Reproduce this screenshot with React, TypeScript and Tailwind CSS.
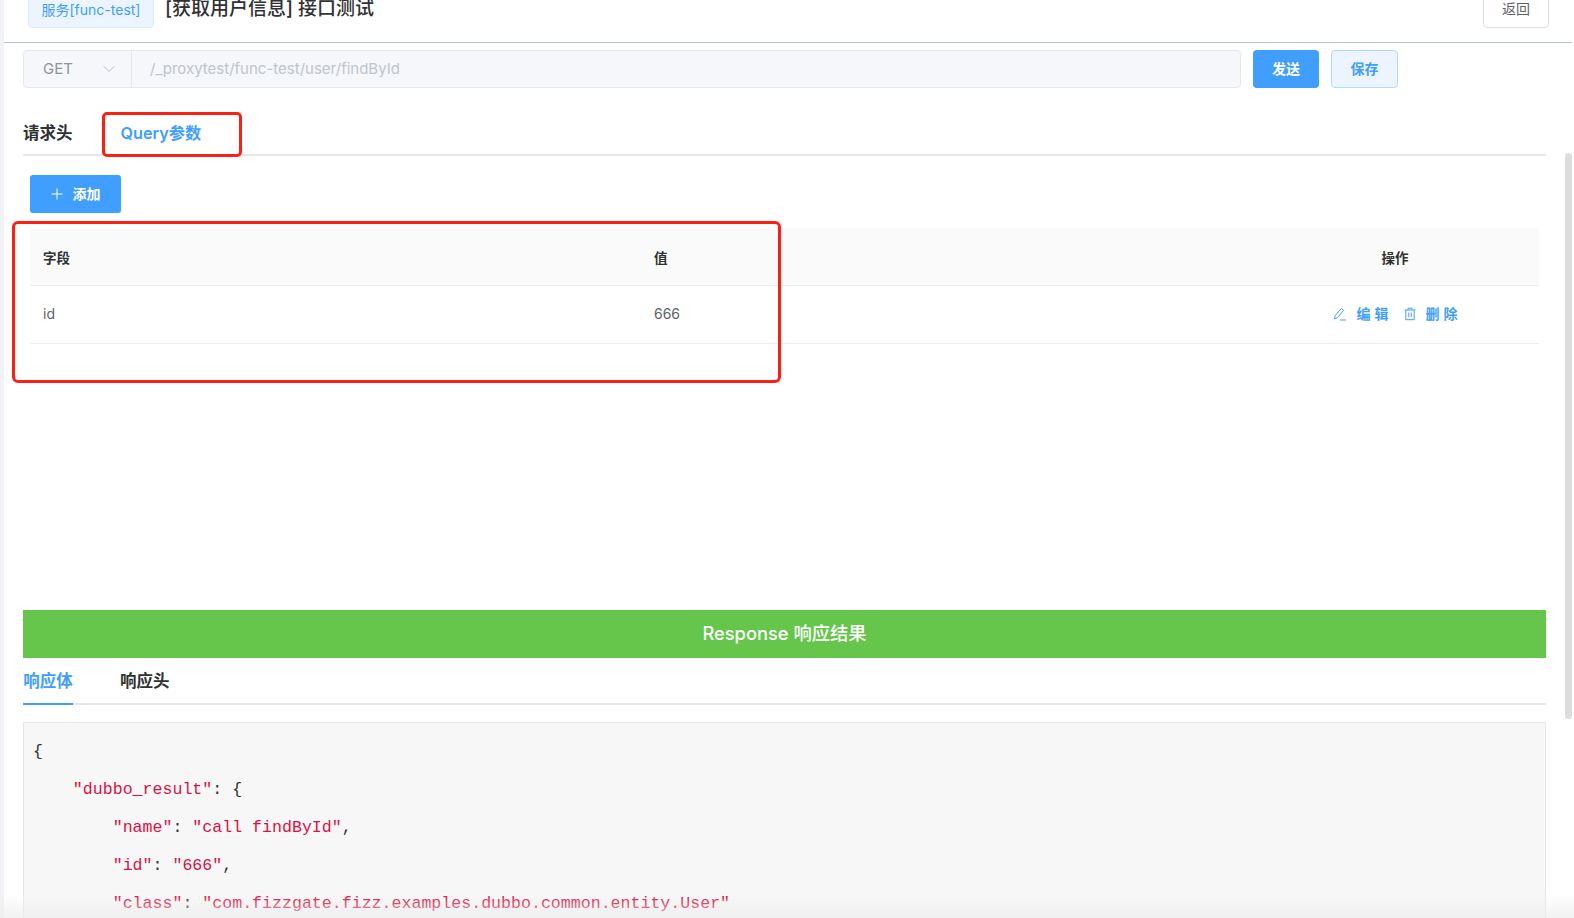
import { ChevronDown } from "lucide-react";

const font = "font-['Inter','Noto_Sans_CJK_SC',sans-serif]";

const codeLines = [
  { indent: 0, parts: [{ t: "{", c: "text-[#333333]" }] },
  {
    indent: 1,
    parts: [
      { t: '"dubbo_result"', c: "text-[#dd1144]" },
      { t: ": {", c: "text-[#333333]" },
    ],
  },
  {
    indent: 2,
    parts: [
      { t: '"name"', c: "text-[#dd1144]" },
      { t: ": ", c: "text-[#333333]" },
      { t: '"call findById"', c: "text-[#dd1144]" },
      { t: ",", c: "text-[#333333]" },
    ],
  },
  {
    indent: 2,
    parts: [
      { t: '"id"', c: "text-[#dd1144]" },
      { t: ": ", c: "text-[#333333]" },
      { t: '"666"', c: "text-[#dd1144]" },
      { t: ",", c: "text-[#333333]" },
    ],
  },
  {
    indent: 2,
    parts: [
      { t: '"class"', c: "text-[#dd1144]" },
      { t: ": ", c: "text-[#333333]" },
      { t: '"com.fizzgate.fizz.examples.dubbo.common.entity.User"', c: "text-[#dd1144]" },
    ],
  },
];

function EditIcon() {
  return (
    <svg width="14" height="14" viewBox="0 0 14 14" fill="none" stroke="#409eff" strokeWidth="1">
      <path d="M1.5 12 L2.2 8.4 L8.4 1.6 L10.6 3.4 L4.4 10.6 Z" />
      <path d="M7 13 H13" />
    </svg>
  );
}

function TrashIcon() {
  return (
    <svg width="14" height="14" viewBox="0 0 14 14" fill="none" stroke="#409eff" strokeWidth="1">
      <path d="M1.5 3 H12.5" />
      <path d="M5 3 V1.2 H9 V3" />
      <path d="M2.8 3 V12.7 H11.2 V3" />
      <path d="M5.8 5.5 V10 M8.2 5.5 V10" />
    </svg>
  );
}

export default function App() {
  return (
    <div className={`relative h-[918px] w-[1574px] overflow-hidden bg-white ${font}`}>
      <div className="flex h-full">
        <div className="w-[4px] shrink-0 bg-[#f2f3f7]" />
        <div className="min-w-0 flex-1">
          {/* Header */}
          <div className="mr-[2px] flex h-[43px] items-start justify-between border-b border-[#b4c3d8] pl-[24px] pr-[23px]">
            <div className="flex items-start">
              <span className="mt-[-12px] flex h-[40px] w-[126px] items-center justify-center rounded-[4px] border border-[#d9ecff] bg-[#ecf5ff] pt-[2px] text-[14px] text-[#409eff]">
                服务[func-test]
              </span>
              <span className="ml-[11px] mt-[-3px] text-[19px] leading-[24px] font-medium text-[#303133]">
                [获取用户信息] 接口测试
              </span>
            </div>
            <button className="mt-[-12px] flex h-[40px] w-[66px] items-center justify-center rounded-[4px] border border-[#dcdfe6] bg-white text-[14px] text-[#606266]">
              返回
            </button>
          </div>

          <div className="pl-[19px] pr-[28px]">
            {/* Request line */}
            <div className="mt-[7px] flex h-[38px] items-stretch">
              <div className="flex w-[1218px] overflow-hidden rounded-[4px] border border-[#e4e7ed] bg-[#f5f7fa]">
                <div className="flex w-[108px] items-center justify-between border-r border-[#e4e7ed] pl-[19px] pr-[12px] text-[15px] text-[#909399]">
                  GET
                  <ChevronDown size={20} strokeWidth={1} className="text-[#a9b2c4]" />
                </div>
                <div className="flex items-center pl-[18px] text-[15px] text-[#c0c4cc]">
                  /_proxytest/func-test/user/findById
                </div>
              </div>
              <button className="ml-[12px] flex w-[66px] items-center justify-center rounded-[4px] bg-[#409eff] pb-[2px] text-[14px] font-semibold text-white">
                发送
              </button>
              <button className="ml-[12px] flex w-[67px] items-center justify-center rounded-[4px] border border-[#b3d8ff] bg-[#ecf5ff] pb-[2px] text-[14px] font-semibold text-[#409eff]">
                保存
              </button>
            </div>

            {/* Request tabs */}
            <div className="mt-[25px] flex h-[43px] items-start border-b-2 border-[#e4e7ed] font-semibold">
              <span className="mt-[10px] text-[16.5px] leading-[20px] text-[#303133]">请求头</span>
              <span className="ml-[48px] mt-[10px] text-[16.2px] leading-[20px] text-[#409eff]">Query参数</span>
            </div>

            {/* Query table */}
            <div className="px-[7px]">
              <button className="mt-[19px] flex h-[38px] w-[91px] items-center justify-center gap-[10px] rounded-[3px] bg-[#409eff] pb-[1px] text-[14px] font-semibold text-white">
                <svg width="12" height="12" viewBox="0 0 12 12" stroke="white" strokeWidth="1">
                  <path d="M6 0.5 V11.5 M0.5 6 H11.5" />
                </svg>
                添加
              </button>
              <div className="mt-[15px] text-[14px]">
                <div className="flex h-[58px] items-center border-b border-[#ebeef5] bg-[#fafafa] pt-[4px] font-bold text-[#303133]">
                  <div className="w-[624px] pl-[13px] text-[13.5px]">字段</div>
                  <div className="flex-1 text-[13.5px]">值</div>
                  <div className="w-[288px] text-center text-[13.5px]">操作</div>
                </div>
                <div className="flex h-[58px] items-center border-b border-[#ebeef5] pb-[2px] text-[#606266]">
                  <div className="w-[624px] pl-[13px]">id</div>
                  <div className="flex-1">666</div>
                  <div className="flex w-[288px] items-center justify-center pl-[4px] text-[14px] font-semibold tracking-[4px] text-[#409eff]">
                    <EditIcon />
                    <span className="ml-[10px]">编辑</span>
                    <span className="ml-[10px]">
                      <TrashIcon />
                    </span>
                    <span className="ml-[9px]">删除</span>
                  </div>
                </div>
              </div>
            </div>

            {/* Response */}
            <div className="mt-[266px] flex h-[48px] items-center justify-center bg-[#65c64b] text-[18.3px] font-medium text-white">
              Response 响应结果
            </div>
            <div className="mt-[1px] flex h-[46px] items-stretch border-b-2 border-[#e4e7ed] text-[16.5px] font-semibold">
              <span className="mb-[-2px] flex w-[50px] items-center justify-center border-b-2 border-[#409eff] text-[#409eff]">
                响应体
              </span>
              <span className="ml-[47px] flex items-center text-[#303133]">响应头</span>
            </div>
            <div className="mt-[17px] h-[300px] border border-[#e4e7ed] bg-[#f7f7f7] pl-[9px] pt-[10px] font-['Liberation_Mono',monospace] text-[16.6px] leading-[38px]">
              {codeLines.map((line, i) => (
                <div key={i} className="whitespace-pre">
                  {"    ".repeat(line.indent)}
                  {line.parts.map((p, j) => (
                    <span key={j} className={p.c}>
                      {p.t}
                    </span>
                  ))}
                </div>
              ))}
            </div>
          </div>
        </div>
      </div>

      {/* Annotations drawn on top of the screenshot */}
      <div className="absolute left-[102px] top-[112px] h-[45px] w-[140px] rounded-[5px] border-[3px] border-[#fc2014]" />
      <div className="absolute left-[12px] top-[221px] h-[162px] w-[769px] rounded-[6px] border-[3px] border-[#fc2014]" />

      {/* Scrollbar */}
      <div className="absolute left-[1565px] top-[153px] h-[566px] w-[7px] rounded-[4px] bg-[#dcdcdc]" />

      {/* Bottom fade */}
      <div className="absolute bottom-0 left-0 right-0 h-[24px] bg-gradient-to-b from-transparent to-[#ececec]/70" />
    </div>
  );
}
